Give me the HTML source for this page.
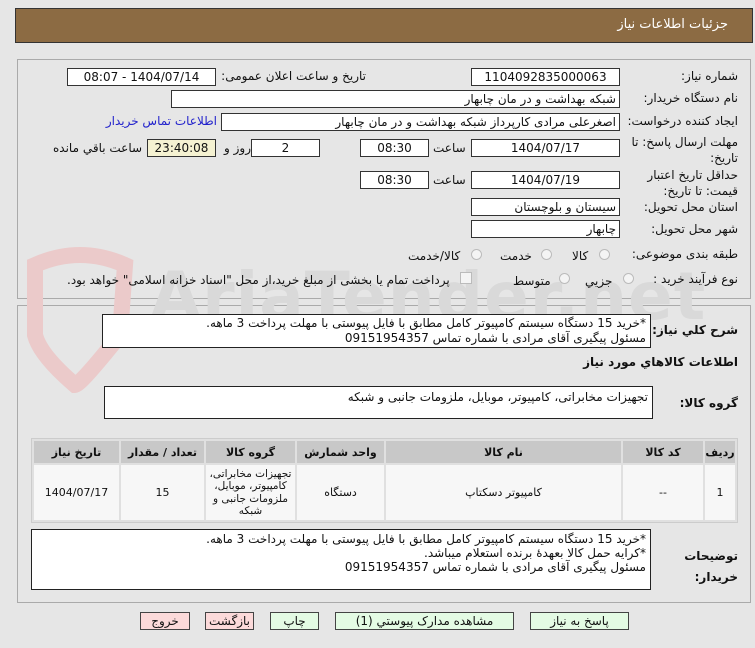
<!DOCTYPE html>
<html><head><meta charset="utf-8"><style>
*{box-sizing:border-box;margin:0;padding:0}
body{width:755px;height:648px;background:#e6e6e6;font-family:"DejaVu Sans","Liberation Sans",sans-serif;font-size:12px;color:#111;position:relative;overflow:hidden;direction:rtl}
.a{position:absolute}
.box{position:absolute;background:#fff;border:1px solid #333;height:18px;line-height:16px;padding:0 3px;font-size:12px;white-space:nowrap;overflow:hidden}
.c{text-align:center}
.l{position:absolute;white-space:nowrap;font-size:12px}
.panel{position:absolute;border:1px solid #aaa;background:#e6e6e6}
.ta{position:absolute;background:#fff;border:1px solid #222;font-size:12px;padding:2px 4px;white-space:nowrap;overflow:hidden}
table{position:absolute;border-collapse:separate;border-spacing:2px;background:#e0e0e0;border:1px solid #ccc;table-layout:fixed}
th{background:#c8c8c8;font-size:11px;height:22px;font-weight:bold}
td{background:#f7f7f7;text-align:center;font-size:11px}
.btn{position:absolute;top:612px;height:18px;border:1px solid #444;background:#e4fbe4;font-size:12px;text-align:center;line-height:16px}
.rad{position:absolute;width:11px;height:11px;border:1px solid #bbb;border-radius:50%;background:#f4f4f4}
</style></head><body>
<div class="a" style="left:15px;top:8px;width:738px;height:35px;background:#8c6b43;border:1px solid #333"></div>
<div class="l" style="right:27px;top:17px;color:#fff;font-size:13px">جزئیات اطلاعات نیاز</div>

<div class="panel" style="left:17px;top:59px;width:734px;height:240px"></div>
<div class="panel" style="left:17px;top:305px;width:734px;height:298px"></div>

<!-- watermark -->
<svg class="a" style="left:20px;top:245px" width="120" height="150"><path d="M15 20 Q60 0 105 20 L100 90 Q60 140 55 140 Q20 110 15 90 Z" fill="none" stroke="#ebcaca" stroke-width="16"/></svg>
<div class="l" style="left:150px;top:258px;font-size:66px;font-weight:bold;color:#d9d9d9;direction:ltr;letter-spacing:1px">AriaTender.net</div>

<div class="l" style="right:17px;top:69px">شماره نیاز:</div>
<div class="box c" style="left:471px;top:68px;width:149px">1104092835000063</div>
<div class="l" style="right:389px;top:69px">تاریخ و ساعت اعلان عمومی:</div>
<div class="box c" style="left:67px;top:68px;width:149px">1404/07/14 - 08:07</div>

<div class="l" style="right:17px;top:91px">نام دستگاه خریدار:</div>
<div class="box" style="left:171px;top:90px;width:449px">شبکه بهداشت و در مان چابهار</div>

<div class="l" style="right:17px;top:114px">ایجاد کننده درخواست:</div>
<div class="box" style="left:221px;top:113px;width:399px">اصغرعلی مرادی کارپرداز شبکه بهداشت و در مان چابهار</div>
<div class="l" style="right:538px;top:114px;color:#22c">اطلاعات تماس خریدار</div>

<div class="l" style="right:17px;top:134px;line-height:16px">مهلت ارسال پاسخ: تا<br>تاریخ:</div>
<div class="box c" style="left:471px;top:139px;width:149px">1404/07/17</div>
<div class="l" style="left:433px;top:141px">ساعت</div>
<div class="box c" style="left:360px;top:139px;width:69px">08:30</div>
<div class="box c" style="left:251px;top:139px;width:69px">2</div>
<div class="l" style="left:224px;top:141px">روز و</div>
<div class="box c" style="left:147px;top:139px;width:69px;background:#f5f2d2">23:40:08</div>
<div class="l" style="left:53px;top:141px">ساعت باقي مانده</div>

<div class="l" style="right:17px;top:167px;line-height:16px">حداقل تاریخ اعتبار<br>قیمت: تا تاریخ:</div>
<div class="box c" style="left:471px;top:171px;width:149px">1404/07/19</div>
<div class="l" style="left:433px;top:173px">ساعت</div>
<div class="box c" style="left:360px;top:171px;width:69px">08:30</div>

<div class="l" style="right:17px;top:200px">استان محل تحویل:</div>
<div class="box" style="left:471px;top:198px;width:149px">سیستان و بلوچستان</div>
<div class="l" style="right:17px;top:222px">شهر محل تحویل:</div>
<div class="box" style="left:471px;top:220px;width:149px">چابهار</div>

<div class="l" style="right:17px;top:247px">طبقه بندی موضوعی:</div>
<div class="rad" style="left:599px;top:249px"></div><div class="l" style="left:572px;top:249px">کالا</div>
<div class="rad" style="left:541px;top:249px"></div><div class="l" style="left:500px;top:249px">خدمت</div>
<div class="rad" style="left:471px;top:249px"></div><div class="l" style="left:408px;top:249px">کالا/خدمت</div>

<div class="l" style="right:17px;top:272px">نوع فرآیند خرید :</div>
<div class="rad" style="left:623px;top:273px"></div><div class="l" style="left:585px;top:274px">جزیي</div>
<div class="rad" style="left:559px;top:273px"></div><div class="l" style="left:513px;top:274px">متوسط</div>
<div class="a" style="left:460px;top:272px;width:12px;height:12px;border:1px solid #bbb;background:#f4f4f4"></div>
<div class="l" style="left:67px;top:273px">پرداخت تمام یا بخشی از مبلغ خرید،از محل "اسناد خزانه اسلامی" خواهد بود.</div>

<div class="l" style="right:17px;top:323px;font-weight:bold">شرح کلي نياز:</div>
<div class="ta" style="left:102px;top:314px;width:549px;height:34px;line-height:15px;padding-top:1px">*خرید 15 دستگاه سیستم کامپیوتر کامل مطابق با فایل پیوستی با مهلت پرداخت 3 ماهه.<br>مسئول پیگیری آقای مرادی با شماره تماس 09151954357</div>
<div class="l" style="right:17px;top:355px;font-weight:bold">اطلاعات کالاهاي مورد نياز</div>
<div class="l" style="right:17px;top:396px;font-weight:bold">گروه کالا:</div>
<div class="ta" style="left:104px;top:386px;width:549px;height:33px;line-height:16px">تجهیزات مخابراتی، کامپیوتر، موبایل، ملزومات جانبی و شبکه</div>

<table style="left:31px;top:438px;width:707px;height:85px">
<tr><th style="width:30px">رديف</th><th style="width:80px">کد کالا</th><th style="width:235px">نام کالا</th><th style="width:87px">واحد شمارش</th><th style="width:89px">گروه کالا</th><th style="width:83px">تعداد / مقدار</th><th>تاریخ نیاز</th></tr>
<tr style="height:55px"><td>1</td><td>--</td><td>کامپیوتر دسکتاپ</td><td>دستگاه</td><td style="font-size:10.5px;line-height:12.5px">تجهیزات مخابراتی، کامپیوتر، موبایل، ملزومات جانبی و شبکه</td><td>15</td><td>1404/07/17</td></tr>
</table>

<div class="l" style="right:17px;top:546px;font-weight:bold;line-height:21px">توضیحات<br>خریدار:</div>
<div class="ta" style="left:31px;top:529px;width:620px;height:61px;line-height:14px;padding-top:2px">*خرید 15 دستگاه سیستم کامپیوتر کامل مطابق با فایل پیوستی با مهلت پرداخت 3 ماهه.<br>*کرایه حمل کالا بعهدۀ برنده استعلام میباشد.<br>مسئول پیگیری آقای مرادی با شماره تماس 09151954357</div>

<div class="btn" style="left:140px;width:50px;background:#fcdada">خروج</div>
<div class="btn" style="left:205px;width:49px;background:#fcdada">بازگشت</div>
<div class="btn" style="left:270px;width:49px">چاپ</div>
<div class="btn" style="left:335px;width:179px">مشاهده مدارک پیوستي (1)</div>
<div class="btn" style="left:530px;width:99px">پاسخ به نياز</div>
</body></html>
